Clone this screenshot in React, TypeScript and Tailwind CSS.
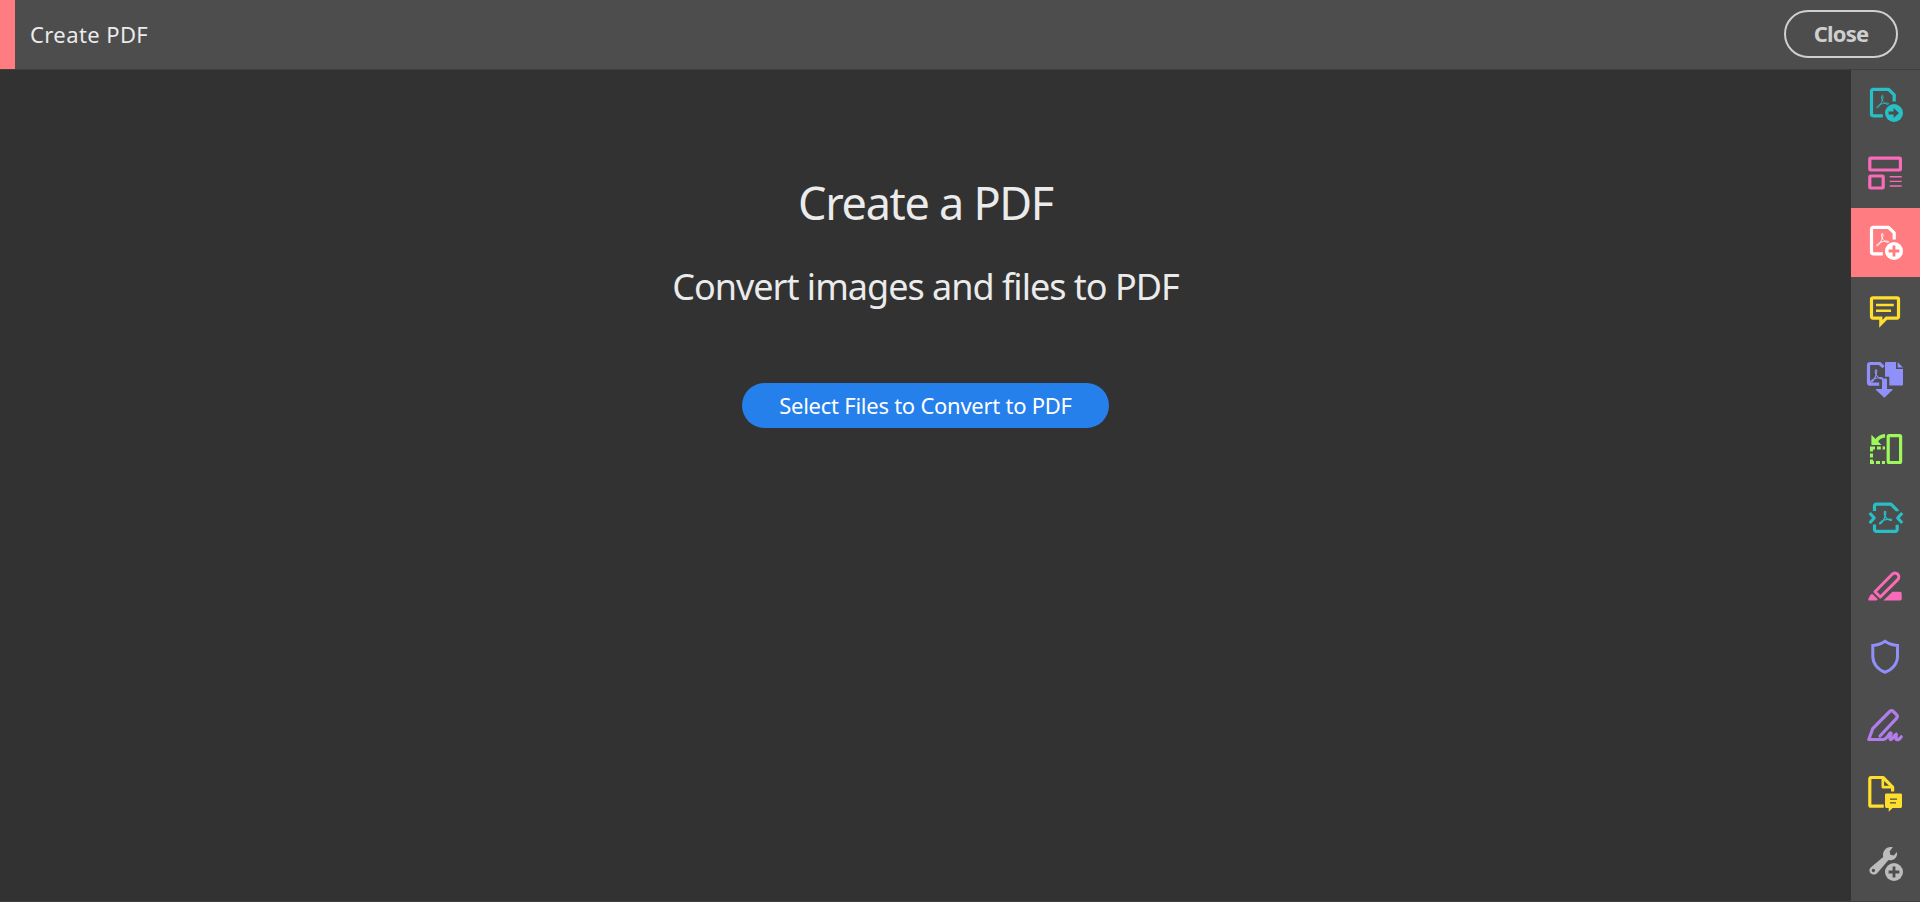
import type { ReactNode } from 'react';

const docPath = 'M31.8 45.8H22.2a1.7 1.7 0 0 1-1.7-1.7V21a1.7 1.7 0 0 1 1.7-1.7H37.6l5.6 5.6V31.6';

function Swoosh({ x = 0, y = 0, w = 0.9 }: { x?: number; y?: number; w?: number }) {
  return (
    <path
      transform={`translate(${x} ${y})`}
      d="M31.2 30.2C30.2 27.6 30.2 25.4 31.3 25.4C32.4 25.4 32.1 28 31.3 30.2C30.2 33.4 27.6 38.1 26 38C24.8 37.5 27.2 34.8 31 33.8C34.5 33 37.8 32.8 37.9 34C37.7 35.2 33.6 34.1 31.2 30.2Z"
      strokeWidth={w}
    />
  );
}

type Tool = { name: string; color: string; active?: boolean; art: ReactNode };

const tools: Tool[] = [
  {
    name: 'Export PDF',
    color: 'text-[#26c0c7]',
    art: (
      <>
        <path d={docPath} />
        <Swoosh />
        <circle cx="43" cy="43" r="10.3" className="fill-[#4d4d4d]" stroke="none" />
        <circle cx="43" cy="43" r="9" fill="currentColor" stroke="none" />
        <path d="M37.6 41.5h5v-3.6l5.4 5.1-5.4 5.1v-3.6h-5z" className="fill-[#4d4d4d]" stroke="none" />
      </>
    ),
  },
  {
    name: 'Organize Pages',
    color: 'text-[#f96bb9]',
    art: (
      <>
        <rect x="18.8" y="19.2" width="30.6" height="11.8" rx="0.8" />
        <rect x="18.8" y="37" width="13.4" height="12" rx="0.8" />
        <path d="M38.7 37.7h12M38.7 42.4h12M38.7 47h12" strokeWidth="1.4" />
      </>
    ),
  },
  {
    name: 'Create PDF',
    color: 'text-white',
    active: true,
    art: (
      <>
        <path d={docPath} />
        <Swoosh />
        <circle cx="43" cy="43" r="10.3" className="fill-[#ff7c80]" stroke="none" />
        <circle cx="43" cy="43" r="9" fill="currentColor" stroke="none" />
        <path d="M43 37.6v10.8M37.6 43h10.8" className="stroke-[#ff7c80]" strokeWidth="2.8" />
      </>
    ),
  },
  {
    name: 'Comment',
    color: 'text-[#ffde2c]',
    art: (
      <>
        <path d="M22 20.8H46a1.5 1.5 0 0 1 1.5 1.5V39.6a1.5 1.5 0 0 1-1.5 1.5H35.4L29.8 46.8V41.1H22a1.5 1.5 0 0 1-1.5-1.5V22.3a1.5 1.5 0 0 1 1.5-1.5Z" strokeLinejoin="miter" />
        <path d="M25 28h17.8M25 33.8h15" strokeWidth="2.6" />
      </>
    ),
  },
  {
    name: 'Combine Files',
    color: 'text-[#9090fa]',
    art: (
      <>
        <path d="M28.2 38.2H19.3a1.8 1.8 0 0 1-1.8-1.8V19.3a1.8 1.8 0 0 1 1.8-1.8H28.6l4 3.7" />
        <Swoosh x={-6.2} y={-1.5} w={1.1} />
        <path d="M35.5 16H45V23h7V38.6a1 1 0 0 1-1 1H38.3V30.8H34V17.3A1.3 1.3 0 0 1 35.5 16Z" fill="currentColor" stroke="none" />
        <path d="M46.6 16L52 21.5H46.6Z" fill="currentColor" stroke="none" />
        <path d="M31 33.2q0-.8.8-.8h3.4q.8 0 .8.8V43h5.1q.9.2.3.9L33.9 51.3q-.6.6-1.1 0L25 43.9q-.5-.7.3-.9H31Z" fill="currentColor" stroke="none" />
      </>
    ),
  },
  {
    name: 'Edit Pages',
    color: 'text-[#9df95b]',
    art: (
      <>
        <rect x="37.2" y="20.6" width="12.4" height="26.9" rx="1" />
        <path d="M20.5 36.5V33H24M26 33h3.8M31.6 33h2.4M20.5 38.6v4M20.5 44.4v3.1H23M25 47.5h4M30.9 47.5h3.1" strokeWidth="3" strokeLinejoin="miter" />
        <path d="M20.4 19.7V29.2q0 .7.7.7H30.6Z" fill="currentColor" stroke="none" />
        <path d="M25.2 26C27.2 22.8 30.2 21 34.1 20.7" strokeWidth="3.4" />
      </>
    ),
  },
  {
    name: 'Compress PDF',
    color: 'text-[#26c0c7]',
    art: (
      <>
        <path d="M23.5 27V22a1.8 1.8 0 0 1 1.8-1.8H40L46.2 26.3V27.3M23.5 40.6V45.6a1.8 1.8 0 0 0 1.8 1.8H44.4a1.8 1.8 0 0 0 1.8-1.8V40.8" />
        <path d="M18.7 29L23.2 34L18.7 39M51.2 29L46.7 34L51.2 39" />
        <Swoosh x={2.8} y={2} w={1.2} />
      </>
    ),
  },
  {
    name: 'Redact',
    color: 'text-[#f96bb9]',
    art: (
      <>
        <path d="M24 38.8L41.2 21.2a3.8 3.8 0 0 1 5.5 5.4L29.3 44Z" strokeWidth="3" />
        <path d="M41.5 38.7H49a1.7 1.7 0 0 1 1.7 1.7V46a1.4 1.4 0 0 1-1.4 1.4H32.3ZM21.2 40.7L26.8 46.2L25.5 47.4H17.8q-.8-.1-.5-1.5L19.3 42Z" fill="currentColor" stroke="none" />
      </>
    ),
  },
  {
    name: 'Protect',
    color: 'text-[#9090fa]',
    art: <path d="M34 19.2C30.5 21.6 26.5 23.2 21.8 23.4V34.5C21.8 42 27.5 48.2 34 50.2C40.5 48.2 46.5 42 46.5 34.5V23.4C41.6 23.2 37.5 21.6 34 19.2Z" strokeWidth="3" strokeLinejoin="miter" />,
  },
  {
    name: 'Fill & Sign',
    color: 'text-[#b07deb]',
    art: (
      <path d="M29 45L45.5 27.3Q47.2 25.5 45.5 23.7L42.3 20.5Q40.5 18.7 38.7 20.5L21.7 37.7L17.8 48.5H32C36 48.5 38 42 39.6 41.8C41.4 42 37.4 47.8 39.5 48.5C42 49.2 43.8 42.5 45.3 43C46.4 43.7 43.6 48.1 45.7 48.6C47.3 49 48.8 48 50.2 45.8" strokeLinecap="round" />
    ),
  },
  {
    name: 'Send for Comments',
    color: 'text-[#ffde2c]',
    art: (
      <>
        <path d="M32.8 46.2H20.1a1.3 1.3 0 0 1-1.3-1.3V18.8a1.3 1.3 0 0 1 1.3-1.3H32L41.6 27.2V31.6" />
        <path d="M31.8 17.5V27.1H41.7" strokeWidth="2.6" />
        <path d="M35.4 33.4H49.6a1.4 1.4 0 0 1 1.4 1.4V46.6a1.4 1.4 0 0 1-1.4 1.4H41.6L37.7 51.8V48H35.4A1.4 1.4 0 0 1 34 46.6V34.8a1.4 1.4 0 0 1 1.4-1.4Z" fill="currentColor" stroke="none" />
        <path d="M39 39.1h7M39 42.8h6" className="stroke-[#4d4d4d]" strokeWidth="1.3" />
      </>
    ),
  },
  {
    name: 'More Tools',
    color: 'text-[#bcbcbc]',
    art: (
      <>
        <path
          fillRule="evenodd"
          d="M41.8 18.3L38.7 22.2L39.3 25.8L42.8 26.4L45.9 23C46.9 27.6 43.6 31.6 39 31.2L37.5 31L26.1 44.3C23.5 47.3 17.6 44.8 18.5 40.4C18.7 39.5 19.3 38.9 20 38.2L32.2 28C30.9 22.6 35.3 16.9 41.8 18.3ZM22.4 39.8a1.7 1.7 0 1 0 .01 0Z"
          fill="currentColor"
          stroke="none"
        />
        <circle cx="43" cy="43" r="10.4" className="fill-[#4d4d4d]" stroke="none" />
        <circle cx="43" cy="43" r="9" fill="currentColor" stroke="none" />
        <path d="M43 37.6v10.8M37.6 43h10.8" className="stroke-[#4d4d4d]" strokeWidth="2.8" />
      </>
    ),
  },
];

export default function App() {
  return (
    <div className="flex h-screen w-full flex-col overflow-hidden bg-[#323232] font-['Noto_Sans','Open_Sans',sans-serif] text-[#ebebeb]">
      <header className="flex h-[70px] shrink-0 items-stretch border-b border-[#3e3e3e] bg-[#4d4d4d]">
        <div className="w-[15px] bg-[#ff7c80]" />
        <h1 className="flex flex-1 items-center pb-px pl-[15px] text-[22px] tracking-[0.4px]">Create PDF</h1>
        <button className="mr-[22px] mt-2.5 flex h-12 w-[114px] items-center justify-center rounded-full border-2 border-[#cfcfcf] pb-0.5 text-[22px] font-bold tracking-[-0.8px] text-[#cfcfcf]">
          Close
        </button>
      </header>
      <div className="flex min-h-0 flex-1">
        <main className="flex flex-1 flex-col items-center whitespace-nowrap pt-[103px]">
          <h2 className="text-[45px] leading-[60px] tracking-[-1.3px]">Create a PDF</h2>
          <p className="mt-[30px] text-[36px] leading-[48px] tracking-[-1px]">Convert images and files to PDF</p>
          <button className="mt-[72px] flex h-[45px] w-[367px] items-center justify-center rounded-full bg-[#2680eb] text-[22px] tracking-[-0.25px] text-white">
            Select Files to Convert to PDF
          </button>
        </main>
        <nav className="flex w-[69px] shrink-0 flex-col bg-[#4d4d4d]">
          {tools.map((tool) => (
            <button
              key={tool.name}
              aria-label={tool.name}
              className={`h-[69px] w-[69px] shrink-0 ${tool.color} ${tool.active ? 'bg-[#ff7c80]' : ''}`}
            >
              <svg viewBox="0 0 69 69" width="69" height="69" fill="none" stroke="currentColor" strokeWidth="3.2" strokeLinejoin="round" className="block">
                {tool.art}
              </svg>
            </button>
          ))}
        </nav>
      </div>
      <div className="h-px shrink-0 bg-[#3e3e3e]" />
    </div>
  );
}
